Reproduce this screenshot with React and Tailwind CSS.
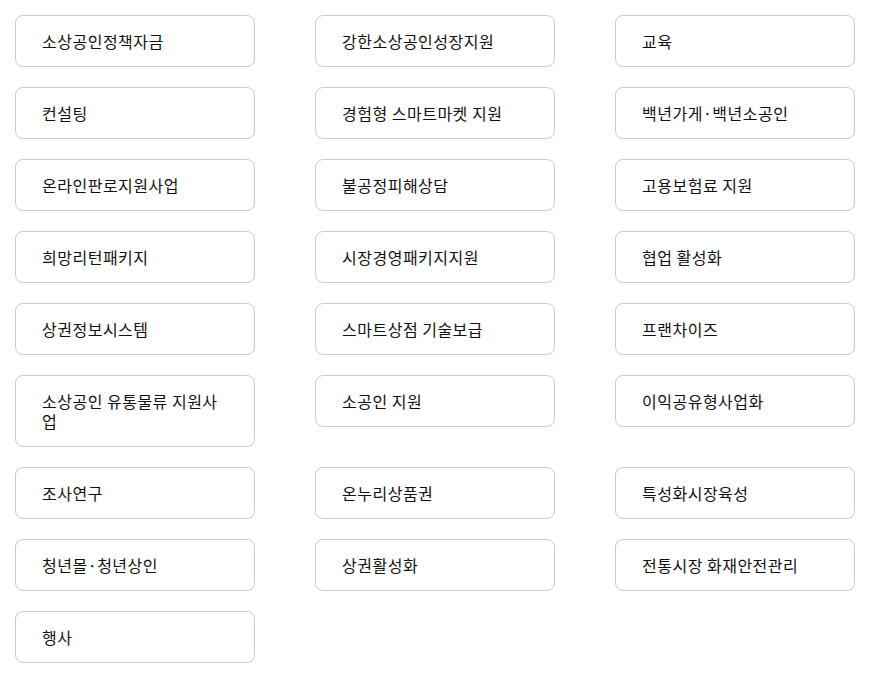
const items = [
    '소상공인정책자금', '강한소상공인성장지원', '교육',
    '컨설팅', '경험형 스마트마켓 지원', '백년가게·백년소공인',
    '온라인판로지원사업', '불공정피해상담', '고용보험료 지원',
    '희망리턴패키지', '시장경영패키지지원', '협업 활성화',
    '상권정보시스템', '스마트상점 기술보급', '프랜차이즈',
    '소상공인 유통물류 지원사업', '소공인 지원', '이익공유형사업화',
    '조사연구', '온누리상품권', '특성화시장육성',
    '청년몰·청년상인', '상권활성화', '전통시장 화재안전관리',
    '행사',
];

export default function App() {
    return (
        <div className="bg-white w-[877px] h-[679px] p-[15px]" style={{ fontFamily: '"Noto Sans CJK KR", "Noto Sans", sans-serif' }}>
            <div className="grid grid-cols-[240px_240px_240px] gap-x-[60px] gap-y-[20px] items-start">
                {items.map((label, index) => (
                    <div
                        key={index}
                        className="border border-[#cccccc] rounded-[8px] pl-[26px] pr-[30px] pt-[15px] pb-[15px] text-[16px] leading-[20px] text-[#111111] tracking-[0.5px]"
                    >
                        {label}
                    </div>
                ))}
            </div>
        </div>
    );
}
